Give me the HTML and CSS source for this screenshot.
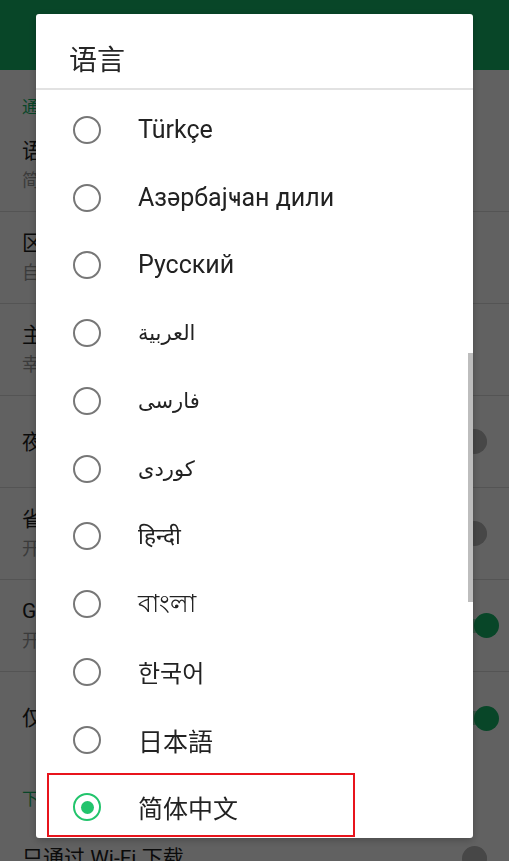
FILE: index.html
```html
<!DOCTYPE html>
<html lang="zh-CN">
<head>
<meta charset="utf-8">
<title>语言</title>
<link rel="stylesheet" href="styles.css">
</head>
<body>
<div class="app">
  <header class="appbar"></header>
  <section class="prefs">
    <div class="cat">通用</div>
    <div class="pref line">
      <div class="txt"><div class="t">语言</div><div class="s">简体中文</div></div>
    </div>
    <div class="pref line">
      <div class="txt"><div class="t">区域</div><div class="s">自动</div></div>
    </div>
    <div class="pref line">
      <div class="txt"><div class="t">主题</div><div class="s">幸运绿</div></div>
    </div>
    <div class="pref line">
      <div class="txt"><div class="t">夜间模式</div></div>
      <div class="switch"><span class="track"></span><span class="knob"></span></div>
    </div>
    <div class="pref line">
      <div class="txt"><div class="t">省流量模式</div><div class="s">开启后不自动加载图片</div></div>
      <div class="switch"><span class="track"></span><span class="knob"></span></div>
    </div>
    <div class="pref line">
      <div class="txt"><div class="t">GIF 自动播放</div><div class="s">开启后自动播放动图</div></div>
      <div class="switch on"><span class="track"></span><span class="knob"></span></div>
    </div>
    <div class="pref">
      <div class="txt"><div class="t">仅在 Wi-Fi 下播放视频</div></div>
      <div class="switch on"><span class="track"></span><span class="knob"></span></div>
    </div>
    <div class="cat cat2">下载</div>
    <div class="pref">
      <div class="txt"><div class="t">只通过 Wi-Fi 下载</div></div>
      <div class="switch"><span class="track"></span><span class="knob"></span></div>
    </div>
  </section>
</div>

<div class="scrim"></div>

<div class="dialog">
  <h1 class="title">语言</h1>
  <div class="list">
    <div class="opt"><span class="radio"></span><span class="label">Türkçe</span></div>
    <div class="opt"><span class="radio"></span><span class="label">Азәрбајҹан дили</span></div>
    <div class="opt"><span class="radio"></span><span class="label">Русский</span></div>
    <div class="opt"><span class="radio"></span><span class="label ar">العربية</span></div>
    <div class="opt"><span class="radio"></span><span class="label ar">فارسی</span></div>
    <div class="opt"><span class="radio"></span><span class="label ar">کوردی</span></div>
    <div class="opt"><span class="radio"></span><span class="label in">हिन्दी</span></div>
    <div class="opt"><span class="radio"></span><span class="label in bn">বাংলা</span></div>
    <div class="opt"><span class="radio"></span><span class="label ko">한국어</span></div>
    <div class="opt"><span class="radio"></span><span class="label cjk ja">日本語</span></div>
    <div class="opt selected"><span class="radio"></span><span class="label cjk">简体中文</span><span class="mark"></span></div>
  </div>
  <div class="scrollbar"></div>
</div>
</body>
</html>
```

FILE: styles.css
```css
html, body {
  margin: 0;
  padding: 0;
}

body {
  width: 509px;
  height: 861px;
  overflow: hidden;
  background: #ffffff;
  font-family: Roboto, "Noto Sans CJK SC", sans-serif;
}

/* ---------- background app ---------- */
.app {
  width: 509px;
}

.appbar {
  height: 70px;
  background: #16b86a;
}

.prefs {
  display: flex;
  flex-direction: column;
}

.cat {
  height: 50px;
  box-sizing: border-box;
  padding: 26px 0 0 22px;
  font-family: "Noto Sans CJK SC", sans-serif;
  font-size: 17px;
  line-height: 20px;
  color: #16b86a;
}

.cat2 {
  height: 48px;
  padding-top: 24px;
}

.pref {
  height: 92px;
  box-sizing: border-box;
  padding: 0 10px 0 22px;
  display: flex;
  align-items: center;
  justify-content: space-between;
}

.pref.line {
  border-bottom: 1px solid #dcdcdc;
}

.txt {
  display: flex;
  flex-direction: column;
  gap: 2px;
}

.t {
  font-family: Roboto, "Noto Sans CJK SC", sans-serif;
  font-size: 21px;
  line-height: 28px;
  color: #1e1e1e;
}

.s {
  font-family: Roboto, "Noto Sans CJK SC", sans-serif;
  font-size: 18px;
  line-height: 28px;
  color: #9c9c9c;
}

.switch {
  position: relative;
  width: 38px;
  height: 25px;
  display: flex;
  align-items: center;
  justify-content: flex-start;
  flex: none;
}

.track {
  width: 24px;
  height: 14px;
  margin-left: 2px;
  border-radius: 7px;
  background: #d0d0d0;
}

.knob {
  position: absolute;
  top: 0;
  left: 1px;
  width: 25px;
  height: 25px;
  border-radius: 50%;
  background: #bababa;
}

.switch.on .track {
  background: #9fe0bd;
}

.switch.on .knob {
  left: 13px;
  background: #16b86a;
}

/* ---------- scrim ---------- */
.scrim {
  position: fixed;
  inset: 0;
  background: rgba(0, 0, 0, 0.62);
}

/* ---------- dialog ---------- */
.dialog {
  position: fixed;
  left: 36px;
  top: 14px;
  width: 437px;
  height: 824px;
  background: #ffffff;
  border-radius: 3px;
  box-shadow: 0 2px 8px rgba(0, 0, 0, 0.25);
  display: flex;
  flex-direction: column;
  overflow: hidden;
}

.title {
  margin: 0;
  height: 76px;
  box-sizing: border-box;
  padding: 27px 0 0 33px;
  border-bottom: 2px solid #e2e2e2;
  font-family: "Noto Sans CJK SC", sans-serif;
  font-weight: 400;
  font-size: 28px;
  line-height: 34px;
  color: #262626;
}

.list {
  flex: 1;
  overflow: hidden;
  padding-top: 6px;
  display: flex;
  flex-direction: column;
}

.opt {
  position: relative;
  height: 67.75px;
  flex: none;
  display: flex;
  align-items: center;
}

.radio {
  width: 28px;
  height: 28px;
  box-sizing: border-box;
  margin-left: 37px;
  border: 2.6px solid #777777;
  border-radius: 50%;
  flex: none;
  display: flex;
  align-items: center;
  justify-content: center;
}

.selected .radio {
  border-color: #22c46c;
}

.selected .radio::after {
  content: "";
  width: 13px;
  height: 13px;
  border-radius: 50%;
  background: #22c46c;
}

.label {
  margin-left: 37px;
  font-family: Roboto, "DejaVu Sans", "Noto Sans CJK SC", sans-serif;
  font-size: 25px;
  line-height: 30px;
  color: #222222;
}

.label.ar {
  font-size: 21px;
}

.label.in {
  font-size: 22.5px;
}

.label.bn {
  font-size: 24.5px;
}

.label.cjk {
  font-family: "Noto Sans CJK SC", sans-serif;
  font-size: 25px;
}

.label.ko {
  font-family: "Noto Sans CJK KR", sans-serif;
  font-size: 24px;
}

.label.ja {
  font-family: "Noto Sans CJK JP", sans-serif;
}

.mark {
  position: absolute;
  left: 11px;
  top: -1px;
  width: 308px;
  height: 64px;
  box-sizing: border-box;
  border: 2.4px solid #e8141c;
}

.scrollbar {
  position: absolute;
  right: 0;
  top: 339px;
  width: 5px;
  height: 249px;
  background: #bdbdbd;
}
```
